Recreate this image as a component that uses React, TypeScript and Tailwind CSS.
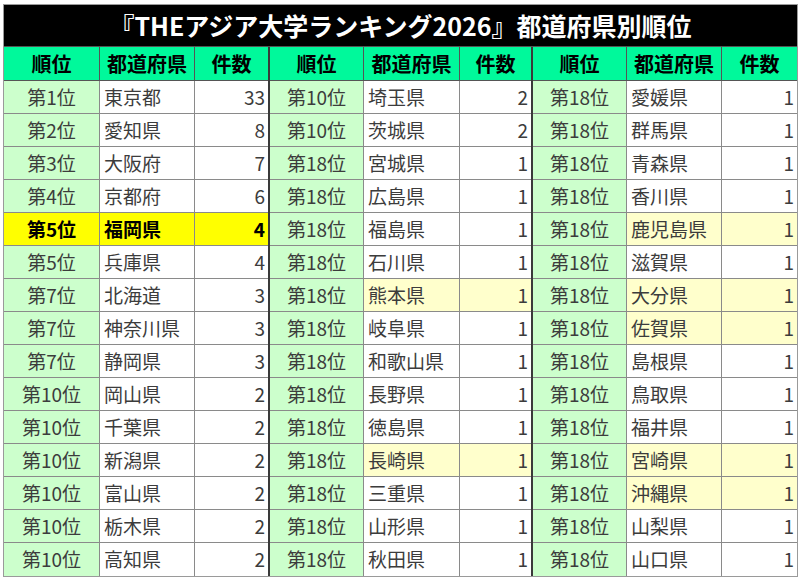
import React from "react";

type Row = { rank: string; pref: string; count: number; mark?: "gold" | "pale" };

const col1: Row[] = [
  { rank: "第1位", pref: "東京都", count: 33 },
  { rank: "第2位", pref: "愛知県", count: 8 },
  { rank: "第3位", pref: "大阪府", count: 7 },
  { rank: "第4位", pref: "京都府", count: 6 },
  { rank: "第5位", pref: "福岡県", count: 4, mark: "gold" },
  { rank: "第5位", pref: "兵庫県", count: 4 },
  { rank: "第7位", pref: "北海道", count: 3 },
  { rank: "第7位", pref: "神奈川県", count: 3 },
  { rank: "第7位", pref: "静岡県", count: 3 },
  { rank: "第10位", pref: "岡山県", count: 2 },
  { rank: "第10位", pref: "千葉県", count: 2 },
  { rank: "第10位", pref: "新潟県", count: 2 },
  { rank: "第10位", pref: "富山県", count: 2 },
  { rank: "第10位", pref: "栃木県", count: 2 },
  { rank: "第10位", pref: "高知県", count: 2 },
];

const col2: Row[] = [
  { rank: "第10位", pref: "埼玉県", count: 2 },
  { rank: "第10位", pref: "茨城県", count: 2 },
  { rank: "第18位", pref: "宮城県", count: 1 },
  { rank: "第18位", pref: "広島県", count: 1 },
  { rank: "第18位", pref: "福島県", count: 1 },
  { rank: "第18位", pref: "石川県", count: 1 },
  { rank: "第18位", pref: "熊本県", count: 1, mark: "pale" },
  { rank: "第18位", pref: "岐阜県", count: 1 },
  { rank: "第18位", pref: "和歌山県", count: 1 },
  { rank: "第18位", pref: "長野県", count: 1 },
  { rank: "第18位", pref: "徳島県", count: 1 },
  { rank: "第18位", pref: "長崎県", count: 1, mark: "pale" },
  { rank: "第18位", pref: "三重県", count: 1 },
  { rank: "第18位", pref: "山形県", count: 1 },
  { rank: "第18位", pref: "秋田県", count: 1 },
];

const col3: Row[] = [
  "愛媛県", "群馬県", "青森県", "香川県", "鹿児島県", "滋賀県", "大分県", "佐賀県",
  "島根県", "鳥取県", "福井県", "宮崎県", "沖縄県", "山梨県", "山口県",
].map((pref) => ({
  rank: "第18位",
  pref,
  count: 1,
  mark: ["鹿児島県", "大分県", "佐賀県", "宮崎県", "沖縄県"].includes(pref) ? ("pale" as const) : undefined,
}));

const groups = [col1, col2, col3];
const widths = [
  ["w-[96px]", "w-[95px]", "w-[73px]"],
  ["w-[94px]", "w-[96px]", "w-[71px]"],
  ["w-[94px]", "w-[95px]", "w-[75px]"],
];

function Group({ rows, w, last }: { rows: Row[]; w: string[]; last: boolean }) {
  return (
    <div className={`flex flex-col ${last ? "" : "border-r-2 border-[#3a3a3a]"}`}>
      <div className="flex h-[34px] bg-[#00f99b] text-[20px] font-bold text-black border-b border-[#555]">
        <div className={`${w[0]} flex items-center justify-center border-r border-[#555]`}>順位</div>
        <div className={`${w[1]} flex items-center justify-center border-r border-[#555]`}>都道府県</div>
        <div className={`${w[2]} flex items-center justify-center`}>件数</div>
      </div>
      {rows.map((r, i) => {
        const gold = r.mark === "gold";
        const pale = r.mark === "pale";
        const cellBg = gold ? "bg-[#ffff00]" : pale ? "bg-[#ffffcc]" : "bg-white";
        return (
          <div
            key={i}
            className={`flex h-[33px] text-[19px] ${gold ? "font-bold text-black" : "text-[#3c3c3c]"} ${
              i === rows.length - 1 ? "" : "border-b border-[#8a8a8a]"
            }`}
          >
            <div
              className={`${w[0]} flex items-center justify-center border-r border-[#8a8a8a] ${
                gold ? "bg-[#ffff00]" : "bg-[#ccffcc]"
              }`}
            >
              {r.rank}
            </div>
            <div className={`${w[1]} flex items-center pl-[4px] border-r border-[#8a8a8a] ${cellBg}`}>{r.pref}</div>
            <div className={`${w[2]} flex items-center justify-end pr-[3px] ${cellBg}`}>{r.count}</div>
          </div>
        );
      })}
    </div>
  );
}

export default function App() {
  return (
    <div className="w-[800px] h-[580px] bg-white pt-[4px] pl-[3px]" style={{ fontFamily: '"Noto Sans CJK JP", "Noto Sans", sans-serif' }}>
      <div className="inline-flex flex-col border border-[#9a9a9a]">
        <div className="h-[42px] bg-black text-white text-[25px] font-bold flex items-center justify-center border-b border-[#555]">
          『THEアジア大学ランキング2026』都道府県別順位
        </div>
        <div className="flex">
          {groups.map((g, i) => (
            <Group key={i} rows={g} w={widths[i]} last={i === 2} />
          ))}
        </div>
      </div>
    </div>
  );
}
